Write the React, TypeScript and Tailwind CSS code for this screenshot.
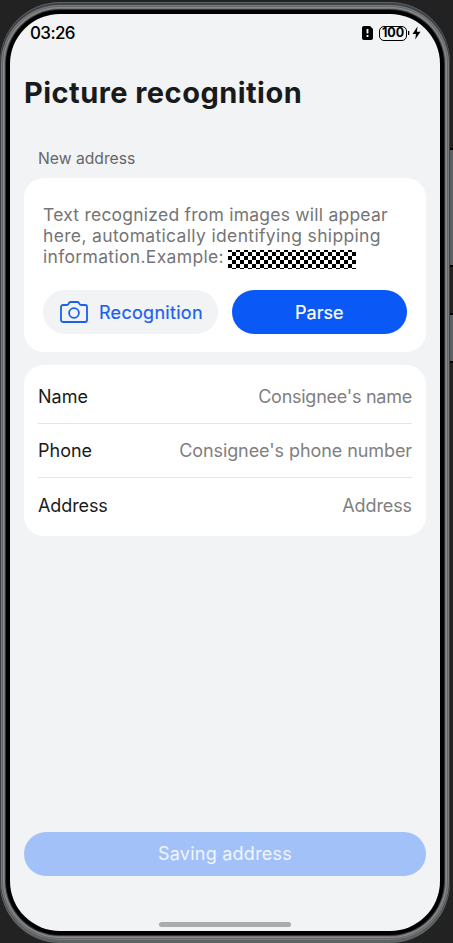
const row = "flex h-[54px] items-center justify-between text-[18px]";

function StatusBar() {
  return (
    <div className="flex h-[38px] items-center justify-between pr-[19px] pl-[20px] text-black">
      <span className="pt-px text-[17px] font-medium tracking-[-0.6px]">03:26</span>
      <div className="flex items-center">
        <svg width="11" height="14" viewBox="0 0 11 14">
          <path d="M2 0h6l3 3v9a2 2 0 0 1-2 2H2a2 2 0 0 1-2-2V2a2 2 0 0 1 2-2z" fill="#000" />
          <path d="M5.5 3v4.500M5.500 9v2" stroke="#fff" strokeWidth="1.8" />
        </svg>
        <div className="ml-[6px] flex h-[15px] w-[28px] items-center justify-center rounded-[5px] border border-black pt-px text-[12.5px] leading-none font-bold">100</div>
        <svg className="ml-[1px]" width="13" height="14" viewBox="0 0 13 14">
          <path d="M0 5h1.3v4H0z" />
          <path d="M9.500.5L4.500 8h3.500L7.200 13.500 12.500 5.800H8.900z" />
        </svg>
      </div>
    </div>
  );
}

export default function App() {
  return (
    <div className="relative h-[943px] w-[453px] overflow-hidden bg-[#222] pt-[14px] pl-[10px] font-['Inter','Liberation_Sans',sans-serif]">
      <span className="absolute top-[148px] right-0 h-[119px] w-[3px] border-y-2 border-black bg-[#5c6063]" />
      <span className="absolute top-[313px] right-0 h-[50px] w-[3px] border-y-2 border-black bg-[#5c6063]" />
      <div className="flex h-[917px] w-[430px] flex-col rounded-[50px] bg-[#f1f3f5] shadow-[0_0_0_4px_#000,0_0_0_5px_#333,0_0_0_6px_#777,0_0_0_7px_#8a8a8a,0_0_0_8px_#666,0_0_0_9px_#777b7e,0_-1px_0_10px_#3c4247,0_2px_0_10px_#5d6265,0_-2px_0_10px_#5d6265]">
        <StatusBar />
        <h1 className="mt-[23px] ml-[14px] text-[29px] leading-[36px] font-bold tracking-[0.46px] whitespace-nowrap text-[#191a1b]">Picture recognition</h1>
        <p className="mt-[38px] ml-[28px] text-[15.7px] leading-[20px] text-[#66676a]">New address</p>
        <section className="mx-[14px] mt-[9px] h-[174px] rounded-[20px] bg-white px-[19px] pt-[26px]">
          <div className="text-[17.5px] leading-[21px] whitespace-nowrap text-[#757575]">
            <div className="tracking-[0.23px]">Text recognized from images will appear</div>
            <div className="tracking-[0.34px]">here, automatically identifying shipping</div>
            <div className="flex">
              <span className="w-[185px] tracking-[0.33px]">information.Example:</span>
              <span className="mt-[4px] h-[19px] w-[128px] bg-[conic-gradient(#000_25%,#fff_0_50%,#000_0_75%,#fff_0)] bg-[length:8px_8px] bg-[position:0_2px]" />
            </div>
          </div>
          <div className="mt-[21px] flex gap-[14px]">
            <button className="flex h-[44px] w-[175px] items-center rounded-full bg-[#f1f3f5] pl-[17px] text-[18px] text-[#1a5ff0]">
              <svg width="28" height="22" viewBox="0 0 28 22" fill="none" stroke="#1a5ff0" strokeWidth="1.8">
                <path d="M3 4h3.800c1 0 1.400-.4 1.700-1.100.4-1 1-1.900 2.200-1.900h6.600c1.200 0 1.800.9 2.200 1.900.3.700.7 1.100 1.700 1.100H25a2 2 0 0 1 2 2v13a2 2 0 0 1-2 2H3a2 2 0 0 1-2-2V6a2 2 0 0 1 2-2z" />
                <circle cx="14" cy="12" r="4.900" />
              </svg>
              <span className="ml-[11px] tracking-[0.3px] [-webkit-text-stroke:0.2px_#1a5ff0]">Recognition</span>
            </button>
            <button className="h-[44px] w-[176px] rounded-full bg-[#0a59f7] text-[18px] text-white [-webkit-text-stroke:0.2px_#fff]">Parse</button>
          </div>
        </section>
        <section className="mx-[14px] mt-[13px] h-[171px] rounded-[20px] bg-white px-[14px] pt-[5px]">
          <div className={row + " border-b border-[#e5e5e5]"}>
            <span className="text-[#191a1b]">Name</span>
            <span className="tracking-[-0.25px] text-[#808080]">Consignee's name</span>
          </div>
          <div className={row + " border-b border-[#e5e5e5]"}>
            <span className="text-[#191a1b]">Phone</span>
            <span className="tracking-[-0.08px] text-[#808080]">Consignee's phone number</span>
          </div>
          <div className={row}>
            <span className="tracking-[-0.1px] text-[#191a1b]">Address</span>
            <span className="tracking-[-0.1px] text-[#808080]">Address</span>
          </div>
        </section>
        <button className="mx-[14px] mt-auto h-[44px] rounded-full bg-[#a3c1f9] pb-px text-[18px] tracking-[0.25px] text-[#f1f5fd]">Saving address</button>
        <div className="mt-[46px] mb-[4px] ml-[149px] h-[5px] w-[132px] rounded-full bg-[#aaabad]" />
      </div>
    </div>
  );
}
